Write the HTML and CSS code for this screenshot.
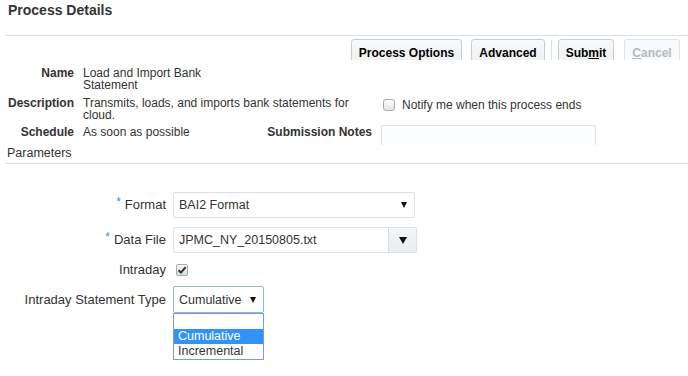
FILE: index.html
```html
<!DOCTYPE html>
<html>
<head>
<meta charset="utf-8">
<title>Process Details</title>
<link rel="stylesheet" href="styles.css">
</head>
<body>
<div class="page">
  <div class="header"><h1 class="title">Process Details</h1></div>

  <div class="toolbar">
    <button class="btn btn-po">Process Options</button>
    <button class="btn btn-adv">Advanced</button>
    <span class="sep"></span>
    <button class="btn btn-submit">Sub<u>m</u>it</button>
    <button class="btn btn-cancel" disabled><u>C</u>ancel</button>
  </div>

  <div class="details">
    <div class="lbl">Name</div>
    <div class="val name-val">Load and Import Bank Statement</div>

    <div class="lbl">Description</div>
    <div class="val desc-val">Transmits, loads, and imports bank statements for cloud.</div>
    <div class="notify"><span class="cb"></span><span>Notify me when this process ends</span></div>

    <div class="lbl row3">Schedule</div>
    <div class="val row3">As soon as possible</div>
    <div class="lbl lbl-notes row3">Submission Notes</div>
    <div class="notes"><div class="textarea"></div></div>
  </div>

  <div class="section-head">Parameters</div>

  <div class="form">
    <div class="flabel"><span class="req">*</span>Format</div>
    <div class="select sel-format">
      <span>BAI2 Format</span>
      <span class="arrow"></span>
    </div>

    <div class="flabel"><span class="req">*</span>Data File</div>
    <div class="select sel-file">
      <span class="sel-text">JPMC_NY_20150805.txt</span>
      <span class="sel-btn"><span class="arrow arrow-lg"></span></span>
    </div>

    <div class="flabel">Intraday</div>
    <div class="chk-wrap">
      <span class="chk">
        <svg width="10" height="10" viewBox="0 0 10 10"><path d="M1.5 5.2 L4 7.6 L8.6 2.2" fill="none" stroke="#333" stroke-width="2"/></svg>
      </span>
    </div>

    <div class="flabel">Intraday Statement Type</div>
    <div class="combo">
      <div class="select sel-type">
        <span>Cumulative</span>
        <span class="arrow"></span>
      </div>
      <ul class="listbox">
        <li class="opt empty">&nbsp;</li>
        <li class="opt selected">Cumulative</li>
        <li class="opt">Incremental</li>
      </ul>
    </div>
  </div>
</div>
</body>
</html>
```

FILE: styles.css
```css
html, body {
  margin: 0;
  padding: 0;
  background: #ffffff;
}

body {
  font-family: "Liberation Sans", Arial, sans-serif;
  font-size: 12px;
  color: #333333;
}

.page {
  width: 688px;
  height: 376px;
  overflow: hidden;
}

/* Header */
.header {
  height: 35px;
  margin-left: 5px;
  border-bottom: 1px solid #d9e1e7;
}

.title {
  margin: 0;
  padding: 2px 0 0 3px;
  font-size: 14px;
  line-height: 17px;
  font-weight: bold;
  color: #333333;
}

/* Toolbar */
.toolbar {
  display: flex;
  justify-content: flex-end;
  align-items: flex-start;
  height: 21px;
  margin-top: 3px;
  padding-right: 8px;
  overflow: hidden;
}

.btn {
  height: 28px;
  padding: 0;
  margin: 0;
  border: 1px solid #c4ced7;
  border-radius: 3px 3px 0 0;
  background: linear-gradient(#f8f9fa, #eceef0);
  font-family: "Liberation Sans", Arial, sans-serif;
  font-size: 12px;
  font-weight: bold;
  line-height: 24px;
  color: #000000;
  text-align: center;
  white-space: nowrap;
  box-sizing: border-box;
}

.btn-po { width: 111px; line-height: 25px; }
.btn-adv { width: 74px; margin-left: 9px; }
.btn-submit { width: 56px; }
.btn-cancel {
  width: 56px;
  margin-left: 10px;
  color: #b4b9bd;
  border-color: #dfe4e8;
  background: #f9fafb;
}

.sep {
  width: 1px;
  height: 20px;
  margin: 1px 6px 0 6px;
  background: #d9e1e7;
}

/* Details */
.details {
  display: grid;
  grid-template-columns: 74px 168px 112px 215px;
  column-gap: 9px;
  margin-top: 4px;
}

.lbl {
  grid-column: 1;
  padding: 3px 0;
  text-align: right;
  font-weight: bold;
  line-height: 12px;
  color: #333333;
  white-space: nowrap;
}

.lbl-notes {
  grid-column: 3;
}

.val {
  padding: 3px 0;
  line-height: 12px;
}

.row3 {
  padding-top: 2px;
}

.name-val {
  max-width: 126px;
}

.desc-val {
  grid-column: 2 / span 2;
}

.notify {
  grid-column: 4;
  display: flex;
  align-items: center;
  padding-top: 5px;
  height: 12px;
  line-height: 12px;
  white-space: nowrap;
}

.cb {
  display: inline-block;
  width: 12px;
  height: 12px;
  box-sizing: border-box;
  margin: 0 7px 0 2px;
  border: 1px solid #a7a9ab;
  border-radius: 3px;
  background: linear-gradient(#fdfdfd, #e4e5e6);
}

.notes {
  grid-column: 4;
  padding-top: 1px;
}

.textarea {
  width: 215px;
  height: 20px;
  box-sizing: border-box;
  border: 1px solid #dfe4e8;
  border-bottom: none;
  border-radius: 2px 2px 0 0;
  background: #fbfcfd;
}

/* Section head */
.section-head {
  margin: 2px 0 0 5px;
  padding: 0 0 4px 2px;
  line-height: 12px;
  font-size: 12.5px;
  border-bottom: 1px solid #d9e1e7;
}

/* Parameters form */
.form {
  display: grid;
  grid-template-columns: 166px auto;
  column-gap: 7px;
  row-gap: 9px;
  align-items: center;
  justify-items: start;
  padding-top: 28px;
}

.flabel {
  justify-self: end;
  font-size: 13px;
  line-height: 15px;
  color: #333333;
  white-space: nowrap;
}

.req {
  color: #4d8bd3;
  font-size: 12px;
  margin-right: 4px;
  position: relative;
  top: -3px;
}

.select {
  display: flex;
  align-items: center;
  justify-content: space-between;
  box-sizing: border-box;
  border: 1px solid #dce2e6;
  border-radius: 2px;
  background: #ffffff;
  padding-left: 5px;
  color: #333333;
  font-size: 12.5px;
  line-height: 14px;
}

.sel-format {
  width: 242px;
  height: 26px;
  padding-right: 7px;
}

.sel-file {
  width: 244px;
  height: 26px;
  padding-right: 0;
}

.sel-btn {
  display: flex;
  align-items: center;
  justify-content: center;
  width: 27px;
  height: 24px;
  border-left: 1px solid #d5dbe0;
  background: linear-gradient(#f4f5f6, #ebedee);
  border-radius: 0 2px 2px 0;
}

.arrow {
  display: inline-block;
  width: 0;
  height: 0;
  border-left: 3px solid transparent;
  border-right: 3px solid transparent;
  border-top: 6px solid #111111;
}

.arrow-lg {
  border-left-width: 4px;
  border-right-width: 4px;
  border-top-width: 7px;
}

.chk-wrap {
  height: 15px;
  display: flex;
  align-items: center;
  padding-left: 3px;
}

.chk {
  display: flex;
  align-items: center;
  justify-content: center;
  width: 12px;
  height: 12px;
  box-sizing: border-box;
  border: 1px solid #a9abad;
  border-radius: 2px;
  background: linear-gradient(#f6f6f6, #dcdcdc);
}

.chk svg {
  display: block;
}

.combo {
  position: relative;
}

.sel-type {
  width: 91px;
  height: 27px;
  padding-right: 7px;
  border-color: #8fb6e2;
}

.listbox {
  position: absolute;
  left: 0;
  top: 27px;
  width: 91px;
  margin: 0;
  padding: 0;
  list-style: none;
  box-sizing: border-box;
  border: 1px solid #7f9ccc;
  background: #ffffff;
}

.opt {
  height: 15px;
  line-height: 15px;
  padding-left: 4px;
  font-size: 12.5px;
  color: #333333;
  white-space: nowrap;
}

.opt.selected {
  background: #3393f5;
  color: #ffffff;
}
```
